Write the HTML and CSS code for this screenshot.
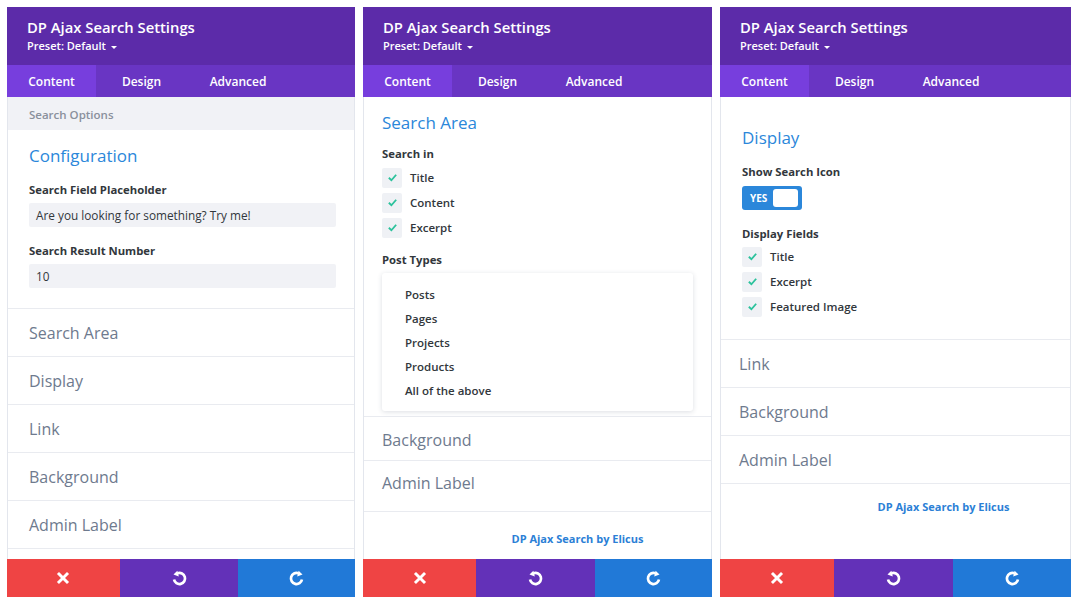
FILE: index.html
```html
<!DOCTYPE html>
<html lang="en">
<head>
<meta charset="utf-8">
<title>DP Ajax Search Settings</title>
<link rel="stylesheet" href="styles.css">
</head>
<body>
<div class="board">

  <!-- Panel 1: Content / Configuration -->
  <section class="panel panel-config">
    <header class="panel-head">
      <h1 class="panel-title">DP Ajax Search Settings</h1>
      <div class="preset">Preset: Default <span class="caret"></span></div>
    </header>
    <nav class="tabs">
      <span class="tab active">Content</span>
      <span class="tab">Design</span>
      <span class="tab">Advanced</span>
    </nav>
    <div class="group-bar">Search Options</div>
    <div class="section sec-config">
      <h2 class="sec-title">Configuration</h2>
      <div class="field-label">Search Field Placeholder</div>
      <div class="input">Are you looking for something? Try me!</div>
      <div class="field-label gap-top">Search Result Number</div>
      <div class="input">10</div>
    </div>
    <div class="toggle-row">Search Area</div>
    <div class="toggle-row">Display</div>
    <div class="toggle-row">Link</div>
    <div class="toggle-row">Background</div>
    <div class="toggle-row">Admin Label</div>
    <footer class="actions">
      <button class="act act-close"><svg viewBox="0 0 24 24" width="16" height="16"><path d="M6 6L18 18M18 6L6 18" stroke="#fff" stroke-width="4.4" stroke-linecap="square" fill="none"/></svg></button>
      <button class="act act-undo"><svg viewBox="0 0 24 24" width="19" height="19"><path d="M9.6 5.4A7 7 0 1 1 5.1 13.2" stroke="#fff" stroke-width="3.4" fill="none"/><path d="M4.4 7L11.1 9.6L9.3 2.2Z" fill="#fff"/></svg></button>
      <button class="act act-redo"><svg viewBox="0 0 24 24" width="19" height="19" class="mirror"><path d="M9.6 5.4A7 7 0 1 1 5.1 13.2" stroke="#fff" stroke-width="3.4" fill="none"/><path d="M4.4 7L11.1 9.6L9.3 2.2Z" fill="#fff"/></svg></button>
    </footer>
  </section>

  <!-- Panel 2: Search Area -->
  <section class="panel panel-area">
    <header class="panel-head">
      <h1 class="panel-title">DP Ajax Search Settings</h1>
      <div class="preset">Preset: Default <span class="caret"></span></div>
    </header>
    <nav class="tabs">
      <span class="tab active">Content</span>
      <span class="tab">Design</span>
      <span class="tab">Advanced</span>
    </nav>
    <div class="section sec-area">
      <h2 class="sec-title">Search Area</h2>
      <div class="field-label">Search in</div>
      <ul class="checks">
        <li><span class="box"><svg viewBox="0 0 12 12" width="11" height="11"><path d="M2 6.3L4.8 9L10 3" stroke="#2bc29c" stroke-width="2" fill="none"/></svg></span>Title</li>
        <li><span class="box"><svg viewBox="0 0 12 12" width="11" height="11"><path d="M2 6.3L4.8 9L10 3" stroke="#2bc29c" stroke-width="2" fill="none"/></svg></span>Content</li>
        <li><span class="box"><svg viewBox="0 0 12 12" width="11" height="11"><path d="M2 6.3L4.8 9L10 3" stroke="#2bc29c" stroke-width="2" fill="none"/></svg></span>Excerpt</li>
      </ul>
      <div class="field-label gap-top-sm">Post Types</div>
      <ul class="dropdown">
        <li>Posts</li>
        <li>Pages</li>
        <li>Projects</li>
        <li>Products</li>
        <li>All of the above</li>
      </ul>
    </div>
    <div class="toggle-row short">Background</div>
    <div class="toggle-row tall">Admin Label</div>
    <div class="credit credit-2">DP Ajax Search by Elicus</div>
    <footer class="actions">
      <button class="act act-close"><svg viewBox="0 0 24 24" width="16" height="16"><path d="M6 6L18 18M18 6L6 18" stroke="#fff" stroke-width="4.4" stroke-linecap="square" fill="none"/></svg></button>
      <button class="act act-undo"><svg viewBox="0 0 24 24" width="19" height="19"><path d="M9.6 5.4A7 7 0 1 1 5.1 13.2" stroke="#fff" stroke-width="3.4" fill="none"/><path d="M4.4 7L11.1 9.6L9.3 2.2Z" fill="#fff"/></svg></button>
      <button class="act act-redo"><svg viewBox="0 0 24 24" width="19" height="19" class="mirror"><path d="M9.6 5.4A7 7 0 1 1 5.1 13.2" stroke="#fff" stroke-width="3.4" fill="none"/><path d="M4.4 7L11.1 9.6L9.3 2.2Z" fill="#fff"/></svg></button>
    </footer>
  </section>

  <!-- Panel 3: Display -->
  <section class="panel panel-display">
    <header class="panel-head">
      <h1 class="panel-title">DP Ajax Search Settings</h1>
      <div class="preset">Preset: Default <span class="caret"></span></div>
    </header>
    <nav class="tabs">
      <span class="tab active">Content</span>
      <span class="tab">Design</span>
      <span class="tab">Advanced</span>
    </nav>
    <div class="section sec-display">
      <h2 class="sec-title">Display</h2>
      <div class="field-label">Show Search Icon</div>
      <div class="switch"><span class="switch-text">YES</span><span class="knob"></span></div>
      <div class="field-label gap-top">Display Fields</div>
      <ul class="checks">
        <li><span class="box"><svg viewBox="0 0 12 12" width="11" height="11"><path d="M2 6.3L4.8 9L10 3" stroke="#2bc29c" stroke-width="2" fill="none"/></svg></span>Title</li>
        <li><span class="box"><svg viewBox="0 0 12 12" width="11" height="11"><path d="M2 6.3L4.8 9L10 3" stroke="#2bc29c" stroke-width="2" fill="none"/></svg></span>Excerpt</li>
        <li><span class="box"><svg viewBox="0 0 12 12" width="11" height="11"><path d="M2 6.3L4.8 9L10 3" stroke="#2bc29c" stroke-width="2" fill="none"/></svg></span>Featured Image</li>
      </ul>
    </div>
    <div class="toggle-row">Link</div>
    <div class="toggle-row">Background</div>
    <div class="toggle-row">Admin Label</div>
    <div class="credit credit-3">DP Ajax Search by Elicus</div>
    <footer class="actions">
      <button class="act act-close"><svg viewBox="0 0 24 24" width="16" height="16"><path d="M6 6L18 18M18 6L6 18" stroke="#fff" stroke-width="4.4" stroke-linecap="square" fill="none"/></svg></button>
      <button class="act act-undo"><svg viewBox="0 0 24 24" width="19" height="19"><path d="M9.6 5.4A7 7 0 1 1 5.1 13.2" stroke="#fff" stroke-width="3.4" fill="none"/><path d="M4.4 7L11.1 9.6L9.3 2.2Z" fill="#fff"/></svg></button>
      <button class="act act-redo"><svg viewBox="0 0 24 24" width="19" height="19" class="mirror"><path d="M9.6 5.4A7 7 0 1 1 5.1 13.2" stroke="#fff" stroke-width="3.4" fill="none"/><path d="M4.4 7L11.1 9.6L9.3 2.2Z" fill="#fff"/></svg></button>
    </footer>
  </section>

</div>
</body>
</html>
```

FILE: styles.css
```css
* { box-sizing: border-box; }

html, body {
  margin: 0;
  background: #fff;
}

body {
  font-family: "Open Sans", "Noto Sans", sans-serif;
  color: #32373c;
}

.board {
  display: flex;
  gap: 8px;
  padding: 7px;
}

.panel {
  flex: 0 0 349px;
  height: 590px;
  display: flex;
  flex-direction: column;
  border: 1px solid #e3e6ed;
  border-top: none;
  border-bottom: none;
  background: #fff;
  /* inner gutters for sections and collapsed rows */
  --pad: 21px;
  --row-pad: 20px;
}

.panel-config { flex-basis: 348px; }
.panel-area { --pad: 18px; --row-pad: 18px; }
.panel-display { flex-basis: 351px; --pad: 21px; --row-pad: 18px; }

/* Header */
.panel-head {
  height: 58px;
  margin: 0 -1px;
  background: #5c2ba9;
  padding: 11px 0 0 20px;
  color: #fff;
}

.panel-title {
  margin: 0;
  font-size: 14.8px;
  font-weight: 600;
  line-height: 18px;
}

.preset {
  margin-top: 2px;
  font-size: 11px;
  font-weight: 600;
  line-height: 15px;
}

.caret {
  display: inline-block;
  width: 0;
  height: 0;
  margin-left: 2px;
  border-left: 3px solid transparent;
  border-right: 3px solid transparent;
  border-top: 3px solid #fff;
  vertical-align: middle;
}

/* Tabs */
.tabs {
  display: flex;
  height: 32px;
  margin: 0 -1px;
  background: #6935c3;
}

.tab {
  width: 89px;
  display: flex;
  align-items: center;
  justify-content: center;
  font-size: 12px;
  font-weight: 600;
  color: #fff;
}

.tab + .tab { width: 91px; }
.tab:last-child { width: 102px; }

.tab.active {
  background: #773edd;
}

/* Group bar */
.group-bar {
  height: 33px;
  display: flex;
  align-items: center;
  padding: 2px 0 0 21px;
  background: #f1f2f6;
  color: #8a909c;
  font-size: 11.5px;
  font-weight: 600;
}

/* Open section */
.section {
  padding: 14px 18px 0 var(--pad);
  border-bottom: 1px solid #e9ebf0;
}

.sec-config { padding-bottom: 20px; }
.sec-area { padding-bottom: 5px; }
.sec-display { padding-top: 29px; padding-bottom: 20px; }

.sec-title {
  margin: 0;
  font-size: 17px;
  font-weight: 400;
  line-height: 24px;
  color: #2b87da;
}

.field-label {
  margin-top: 14px;
  font-size: 11.3px;
  font-weight: 700;
  line-height: 16px;
  color: #32373c;
}

.sec-config .field-label + .input { margin-top: 5px; }

.sec-area .field-label { margin-top: 11px; }
.sec-display .field-label { margin-top: 14px; }

.field-label.gap-top,
.sec-display .field-label.gap-top { margin-top: 16px; }

.sec-area .field-label.gap-top-sm { margin-top: 12px; }

.input {
  margin-top: 6px;
  height: 24px;
  display: flex;
  align-items: center;
  padding-left: 7px;
  background: #f1f2f6;
  border-radius: 2px;
  font-size: 11.8px;
  color: #32373c;
}

/* Checkbox list */
.checks {
  list-style: none;
  margin: 3px 0 0;
  padding: 0;
}

.checks li {
  height: 25px;
  display: flex;
  align-items: center;
  font-size: 11.5px;
  font-weight: 600;
  color: #32373c;
}

.box {
  width: 20px;
  height: 20px;
  margin-right: 8px;
  display: flex;
  align-items: center;
  justify-content: center;
  background: #eff1f5;
  border-radius: 2px;
}

/* Post type dropdown */
.dropdown {
  list-style: none;
  margin: 5px 0 0;
  padding: 9px 0 8px;
  background: #fff;
  border-radius: 3px;
  box-shadow: 0 1px 5px rgba(40, 50, 80, 0.16);
}

.dropdown li {
  height: 24.2px;
  display: flex;
  align-items: center;
  padding-left: 23px;
  font-size: 11.5px;
  font-weight: 600;
  color: #32373c;
}

/* Switch */
.switch {
  margin-top: 6px;
  width: 60px;
  height: 24px;
  display: flex;
  align-items: center;
  justify-content: space-between;
  padding: 0 4px 0 8px;
  background: #2b87da;
  border-radius: 3px;
}

.switch-text {
  font-size: 10px;
  font-weight: 700;
  color: #fff;
}

.knob {
  width: 25px;
  height: 18px;
  background: #fff;
  border-radius: 3px;
}

.sec-display .checks { margin-top: 2px; }

/* Collapsed option groups */
.toggle-row {
  height: 48px;
  flex-shrink: 0;
  display: flex;
  align-items: center;
  padding-left: var(--row-pad);
  border-bottom: 1px solid #e9ebf0;
  font-size: 16px;
  color: #6e7a8e;
}

.panel-config .toggle-row { padding-left: 21px; }
.panel-config .toggle-row:first-of-type { padding-bottom: 1px; }

.toggle-row.short { height: 44px; padding-top: 3px; }
.toggle-row.tall { height: 51px; padding-bottom: 5px; }

/* Credit line */
.credit {
  text-align: center;
  padding-left: 80px;
  font-size: 11px;
  font-weight: 700;
  line-height: 16px;
  color: #2b7fd6;
}

.credit-2 { padding-top: 19px; }
.credit-3 { padding-top: 15px; padding-left: 96px; }

/* Footer actions */
.actions {
  margin: auto -1px 0;
  height: 38px;
  display: grid;
  grid-template-columns: 113fr 119fr 117fr;
}

.act {
  border: none;
  margin: 0;
  padding: 0;
  display: flex;
  align-items: center;
  justify-content: center;
  cursor: pointer;
}

.act-close { background: #ef4444; }
.act-undo { background: #6331b8; }
.act-redo { background: #2179d7; }

.mirror { transform: scaleX(-1); }
```
